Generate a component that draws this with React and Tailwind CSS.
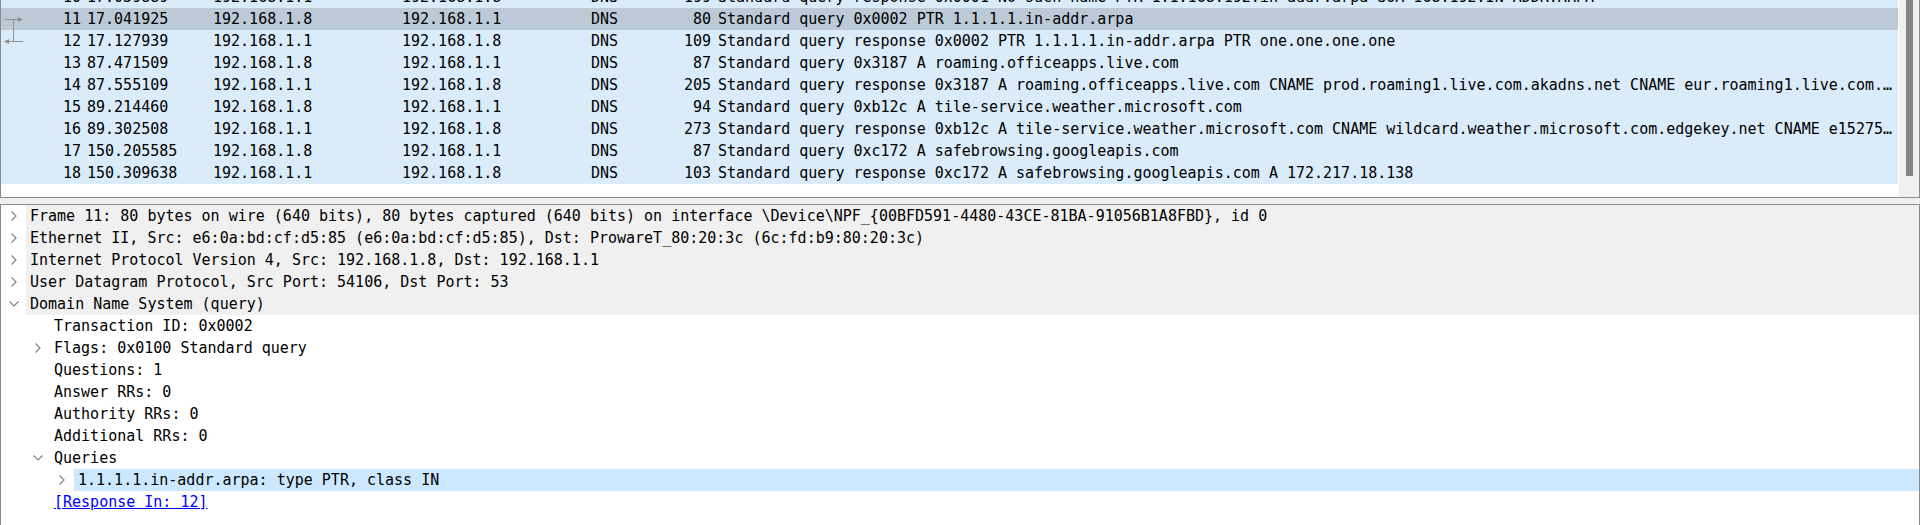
import React from 'react';

const packets = [
  { no: '10', time: '17.039889', src: '192.168.1.1', dst: '192.168.1.8', proto: 'DNS', len: '199', info: 'Standard query response 0x0001 No such name PTR 1.1.168.192.in-addr.arpa SOA 168.192.IN-ADDR.ARPA' },
  { no: '11', time: '17.041925', src: '192.168.1.8', dst: '192.168.1.1', proto: 'DNS', len: '80',  info: 'Standard query 0x0002 PTR 1.1.1.1.in-addr.arpa', selected: true, link: 'out' },
  { no: '12', time: '17.127939', src: '192.168.1.1', dst: '192.168.1.8', proto: 'DNS', len: '109', info: 'Standard query response 0x0002 PTR 1.1.1.1.in-addr.arpa PTR one.one.one.one', link: 'in' },
  { no: '13', time: '87.471509', src: '192.168.1.8', dst: '192.168.1.1', proto: 'DNS', len: '87',  info: 'Standard query 0x3187 A roaming.officeapps.live.com' },
  { no: '14', time: '87.555109', src: '192.168.1.1', dst: '192.168.1.8', proto: 'DNS', len: '205', info: 'Standard query response 0x3187 A roaming.officeapps.live.com CNAME prod.roaming1.live.com.akadns.net CNAME eur.roaming1.live.com.…' },
  { no: '15', time: '89.214460', src: '192.168.1.8', dst: '192.168.1.1', proto: 'DNS', len: '94',  info: 'Standard query 0xb12c A tile-service.weather.microsoft.com' },
  { no: '16', time: '89.302508', src: '192.168.1.1', dst: '192.168.1.8', proto: 'DNS', len: '273', info: 'Standard query response 0xb12c A tile-service.weather.microsoft.com CNAME wildcard.weather.microsoft.com.edgekey.net CNAME e15275…' },
  { no: '17', time: '150.205585', src: '192.168.1.8', dst: '192.168.1.1', proto: 'DNS', len: '87',  info: 'Standard query 0xc172 A safebrowsing.googleapis.com' },
  { no: '18', time: '150.309638', src: '192.168.1.1', dst: '192.168.1.8', proto: 'DNS', len: '103', info: 'Standard query response 0xc172 A safebrowsing.googleapis.com A 172.217.18.138' },
];

const tree = [
  { level: 0, text: 'Frame 11: 80 bytes on wire (640 bits), 80 bytes captured (640 bits) on interface \\Device\\NPF_{00BFD591-4480-43CE-81BA-91056B1A8FBD}, id 0', toggle: 'closed', top: true },
  { level: 0, text: 'Ethernet II, Src: e6:0a:bd:cf:d5:85 (e6:0a:bd:cf:d5:85), Dst: ProwareT_80:20:3c (6c:fd:b9:80:20:3c)', toggle: 'closed', top: true },
  { level: 0, text: 'Internet Protocol Version 4, Src: 192.168.1.8, Dst: 192.168.1.1', toggle: 'closed', top: true },
  { level: 0, text: 'User Datagram Protocol, Src Port: 54106, Dst Port: 53', toggle: 'closed', top: true },
  { level: 0, text: 'Domain Name System (query)', toggle: 'open', top: true },
  { level: 1, text: 'Transaction ID: 0x0002' },
  { level: 1, text: 'Flags: 0x0100 Standard query', toggle: 'closed' },
  { level: 1, text: 'Questions: 1' },
  { level: 1, text: 'Answer RRs: 0' },
  { level: 1, text: 'Authority RRs: 0' },
  { level: 1, text: 'Additional RRs: 0' },
  { level: 1, text: 'Queries', toggle: 'open' },
  { level: 2, text: '1.1.1.1.in-addr.arpa: type PTR, class IN', toggle: 'closed', selected: true },
  { level: 1, text: '[Response In: 12]', link: true },
];

function RelatedMark({ kind }) {
  // little bracket that ties a request to its response
  if (kind === 'out') {
    return (
      <svg width="22" height="22" className="shrink-0 ml-[2px]">
        <path d="M1 11.5H17M10.5 11.5V22" stroke="#8f8f8f" strokeWidth="1" fill="none" />
        <path d="M15 9L20 11.5L15 14Z" fill="#8f8f8f" />
      </svg>
    );
  }
  if (kind === 'in') {
    return (
      <svg width="22" height="22" className="shrink-0 ml-[2px]">
        <path d="M4 11.5H20M10.5 0V11.5" stroke="#8f8f8f" strokeWidth="1" fill="none" />
        <path d="M6 9L1 11.5L6 14Z" fill="#8f8f8f" />
      </svg>
    );
  }
  return <div className="w-[22px] shrink-0 ml-[2px]" />;
}

function PacketRow({ p }) {
  return (
    <div className={`h-[22px] flex items-center whitespace-nowrap ${p.selected ? 'bg-[#bccad8]' : 'bg-[#daebfa]'}`}>
      <div className="w-[83px] shrink-0 flex items-center">
        <RelatedMark kind={p.link} />
        <span className="flex-1 text-right pr-[3px]">{p.no}</span>
      </div>
      <div className="w-[126px] shrink-0 pl-[3px]">{p.time}</div>
      <div className="w-[189px] shrink-0 pl-[3px]">{p.src}</div>
      <div className="w-[189px] shrink-0 pl-[3px]">{p.dst}</div>
      <div className="w-[76px] shrink-0 pl-[3px]">{p.proto}</div>
      <div className="w-[50px] shrink-0 text-right pr-[3px]">{p.len}</div>
      <div className="pl-[4px]">{p.info}</div>
    </div>
  );
}

function Chevron({ open }) {
  if (open) {
    return (
      <svg width="12" height="12" className="ml-[7px]">
        <polyline points="1.5,3.5 6,8 10.5,3.5" stroke="#808080" strokeWidth="1.2" fill="none" />
      </svg>
    );
  }
  return (
    <svg width="12" height="12" className="ml-[7px]">
      <polyline points="3.5,1.5 8,6 3.5,10.5" stroke="#808080" strokeWidth="1.2" fill="none" />
    </svg>
  );
}

function TreeRow({ item }) {
  let band = 'bg-white';
  if (item.top) band = 'bg-[#f0f0f0]';
  if (item.selected) band = 'bg-[#cce8ff]';
  return (
    <div className="h-[22px] flex items-stretch whitespace-nowrap" style={{ paddingLeft: item.level * 24 }}>
      <div className="w-[25px] shrink-0 flex items-center">
        {item.toggle && <Chevron open={item.toggle === 'open'} />}
      </div>
      <div className={`flex-1 flex items-center pl-[4px] ${band}`}>
        {item.link
          ? <span className="text-[#0000ff] underline">{item.text}</span>
          : item.text}
      </div>
    </div>
  );
}

export default function App() {
  return (
    <div className="w-[1920px] h-[525px] overflow-hidden bg-[#f0f0f0] flex flex-col text-[15px] text-black font-['DejaVu_Sans_Mono',monospace]">
      {/* packet list */}
      <div className="h-[198px] shrink-0 flex border-x border-b border-[#8a8a8a] bg-white">
        <div className="flex-1 overflow-hidden">
          <div className="-mt-[14px]">
            {packets.map(p => <PacketRow key={p.no} p={p} />)}
          </div>
        </div>
        <div className="w-[20px] ml-[1px] shrink-0 bg-[#f0f0f0] pl-[7px]">
          <div className="w-[7px] h-[176px] bg-[#858585]" />
        </div>
      </div>

      {/* packet details */}
      <div className="mt-[6px] flex-1 border-x border-t border-[#8a8a8a] bg-white">
        {tree.map((item, i) => <TreeRow key={i} item={item} />)}
      </div>
    </div>
  );
}
